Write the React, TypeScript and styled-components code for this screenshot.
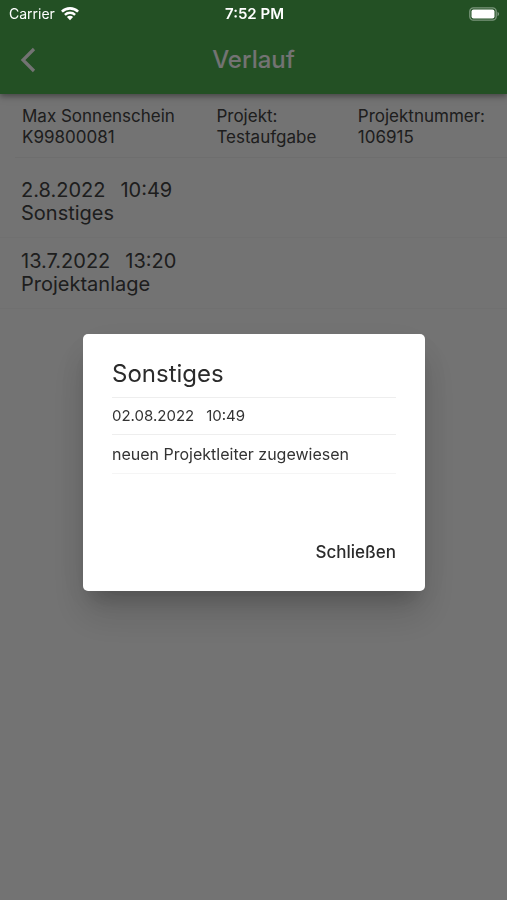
import React from "react";
import styled, { createGlobalStyle } from "styled-components";

const GlobalStyle = createGlobalStyle`
  *, *::before, *::after { box-sizing: border-box; }
  body {
    margin: 0;
    background: #fafafa;
    color: #424242;
    font-family: Inter, "Liberation Sans", sans-serif;
  }
  h1, h2, p, ul { margin: 0; padding: 0; }
  button { font: inherit; border: 0; background: none; padding: 0; cursor: pointer; }
`;

const Page = styled.div`
  min-height: 100vh;
`;

const StatusBar = styled.div`
  position: fixed;
  inset: 0 0 auto;
  z-index: 3;
  display: grid;
  grid-template-columns: 1fr auto 1fr;
  align-items: center;
  height: 27px;
  padding: 0 7px 0 9px;
  color: #ffffff;
  font-size: 14px;
  line-height: 27px;
`;

const Carrier = styled.span`
  display: flex;
  align-items: center;
  gap: 6px;
`;

const Clock = styled.time`
  font-size: 15px;
  font-weight: 600;
`;

const BatteryIcon = styled.svg`
  justify-self: end;
`;

const AppBar = styled.header`
  position: relative;
  display: grid;
  grid-template-columns: 56px 1fr 56px;
  align-items: center;
  height: 94px;
  padding-top: 25px;
  background: #4caf50;
  color: #fafafa;
  box-shadow: 0 2px 5px rgba(0, 0, 0, 0.3), 0 4px 8px rgba(0, 0, 0, 0.12);
`;

const BackButton = styled.button`
  display: flex;
  align-items: center;
  justify-content: center;
  height: 56px;
  color: inherit;
`;

const Title = styled.h1`
  font-size: 24px;
  line-height: 32px;
  font-weight: 500;
  text-align: center;
`;

const ProjectInfo = styled.section`
  display: flex;
  justify-content: space-between;
  margin-left: 15px;
  padding: 12px 22px 9px 7px;
  border-bottom: 1px solid #f0f0f0;
  font-size: 17px;
  line-height: 21px;
`;

const HistoryList = styled.ul`
  list-style: none;
  padding-top: 9px;
`;

const HistoryItem = styled.li`
  border-bottom: 1px solid #f5f5f5;
`;

const HistoryButton = styled.button`
  display: block;
  width: 100%;
  padding: 12px 21px;
  color: inherit;
  font-size: 20px;
  line-height: 23px;
  text-align: left;
`;

const Stamp = styled.span`
  display: flex;
  gap: 15px;
`;

const Backdrop = styled.div`
  position: fixed;
  inset: 0;
  z-index: 2;
  display: flex;
  align-items: center;
  justify-content: center;
  padding: 27px 82px 2px 83px;
  background: rgba(0, 0, 0, 0.54);
`;

const Dialog = styled.div`
  display: flex;
  flex-direction: column;
  width: 100%;
  max-width: 480px;
  padding: 24px 29px 19px;
  border-radius: 5px;
  background: #ffffff;
  box-shadow: 0 15px 20px -9px rgba(0, 0, 0, 0.2),
    0 24px 38px 3px rgba(0, 0, 0, 0.12), 0 9px 46px 8px rgba(0, 0, 0, 0.04);
`;

const DialogTitle = styled.h2`
  padding-bottom: 7px;
  border-bottom: 1px solid #eeeeee;
  color: #2b2b2b;
  font-size: 24px;
  line-height: 32px;
  font-weight: 400;
`;

const DialogDate = styled.p`
  display: flex;
  gap: 12px;
  padding: 8px 0;
  border-bottom: 1px solid #eeeeee;
  color: #333333;
  font-size: 15px;
  line-height: 20px;
`;

const DialogMessage = styled.p`
  padding: 9px 0;
  border-bottom: 1px solid #f5f5f5;
  color: #333333;
  font-size: 16px;
  line-height: 20px;
`;

const DialogActions = styled.div`
  display: flex;
  justify-content: flex-end;
  padding-top: 58px;
`;

const CloseButton = styled.button`
  color: #2b2b2b;
  font-size: 17px;
  line-height: 40px;
  font-weight: 500;
`;

const entries = [
  { date: "2.8.2022", time: "10:49", label: "Sonstiges" },
  { date: "13.7.2022", time: "13:20", label: "Projektanlage" },
];

export default function App() {
  return (
    <Page>
      <GlobalStyle />
      <StatusBar>
        <Carrier>
          Carrier
          <svg width="18" height="14" viewBox="0 0 18 14" fill="none" stroke="currentColor" aria-hidden="true">
            <path d="M0.9 4.7a11.5 11.5 0 0 1 16.2 0" strokeWidth="2.6" />
            <path d="M3.9 7.9a7.3 7.3 0 0 1 10.2 0" strokeWidth="2.4" />
            <path d="M9 13.2L5.9 10.1a4.4 4.4 0 0 1 6.2 0z" fill="currentColor" stroke="none" />
          </svg>
        </Carrier>
        <Clock>7:52 PM</Clock>
        <BatteryIcon width="31" height="14" viewBox="0 0 31 14" aria-hidden="true">
          <rect x="0.8" y="0.8" width="26.4" height="12.4" rx="3.6" fill="none" stroke="#ffffff" strokeOpacity="0.4" strokeWidth="1.3" />
          <rect x="2.5" y="2.5" width="23" height="9" rx="2" fill="#ffffff" />
          <path d="M28.6 4.8a2.5 2.5 0 0 1 0 4.4z" fill="#ffffff" fillOpacity="0.5" />
        </BatteryIcon>
      </StatusBar>

      <AppBar>
        <BackButton aria-label="Zurück">
          <svg width="16" height="26" viewBox="0 0 16 26" fill="none" stroke="currentColor" strokeWidth="3.2" aria-hidden="true">
            <path d="M14 2L3 13L14 24" />
          </svg>
        </BackButton>
        <Title>Verlauf</Title>
      </AppBar>

      <main>
        <ProjectInfo>
          <div>
            <p>Max Sonnenschein</p>
            <p>K99800081</p>
          </div>
          <div>
            <p>Projekt:</p>
            <p>Testaufgabe</p>
          </div>
          <div>
            <p>Projektnummer:</p>
            <p>106915</p>
          </div>
        </ProjectInfo>
        <HistoryList>
          {entries.map((entry) => (
            <HistoryItem key={entry.date}>
              <HistoryButton>
                <Stamp>
                  <span>{entry.date}</span>
                  <span>{entry.time}</span>
                </Stamp>
                {entry.label}
              </HistoryButton>
            </HistoryItem>
          ))}
        </HistoryList>
      </main>

      <Backdrop>
        <Dialog role="dialog" aria-modal="true" aria-labelledby="dialog-title">
          <DialogTitle id="dialog-title">Sonstiges</DialogTitle>
          <DialogDate>
            <span>02.08.2022</span>
            <span>10:49</span>
          </DialogDate>
          <DialogMessage>neuen Projektleiter zugewiesen</DialogMessage>
          <DialogActions>
            <CloseButton>Schließen</CloseButton>
          </DialogActions>
        </Dialog>
      </Backdrop>
    </Page>
  );
}
